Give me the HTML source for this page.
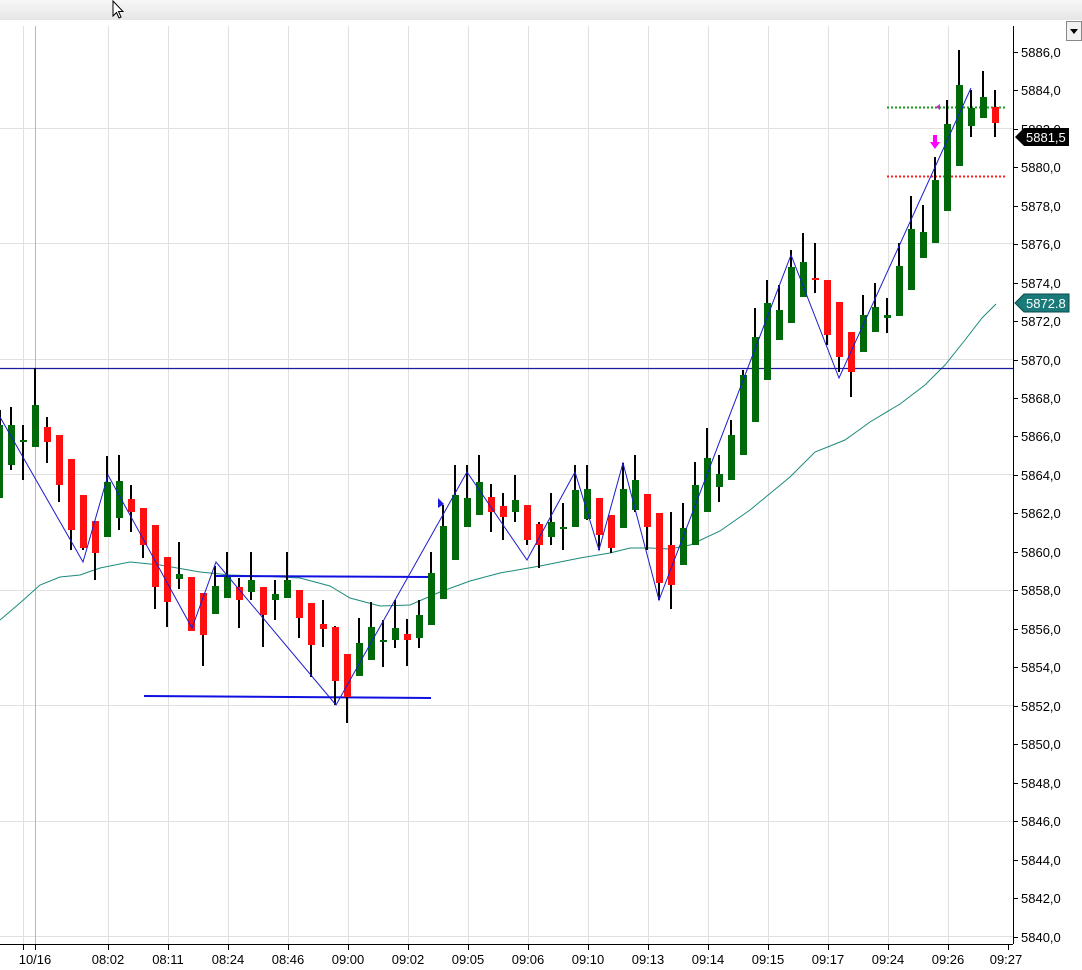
<!DOCTYPE html>
<html><head><meta charset="utf-8"><style>
html,body{margin:0;padding:0;width:1082px;height:970px;overflow:hidden;background:#fff;font-family:"Liberation Sans",sans-serif}
svg{position:absolute;left:0;top:0}
</style></head><body>
<svg width="1082" height="970" viewBox="0 0 1082 970" font-family="Liberation Sans, sans-serif">
<defs><linearGradient id="tb" x1="0" y1="0" x2="0" y2="1"><stop offset="0" stop-color="#f7f7f7"/><stop offset="1" stop-color="#e6e6e6"/></linearGradient></defs>
<rect x="0" y="0" width="1082" height="20" fill="url(#tb)"/>
<g stroke="#e0e0e0" stroke-width="1">
<line x1="23.5" y1="26" x2="23.5" y2="944"/><line x1="108.5" y1="26" x2="108.5" y2="944"/><line x1="168.5" y1="26" x2="168.5" y2="944"/><line x1="228.5" y1="26" x2="228.5" y2="944"/><line x1="288.5" y1="26" x2="288.5" y2="944"/><line x1="348.5" y1="26" x2="348.5" y2="944"/><line x1="408.5" y1="26" x2="408.5" y2="944"/><line x1="468.5" y1="26" x2="468.5" y2="944"/><line x1="528.5" y1="26" x2="528.5" y2="944"/><line x1="588.5" y1="26" x2="588.5" y2="944"/><line x1="648.5" y1="26" x2="648.5" y2="944"/><line x1="708.5" y1="26" x2="708.5" y2="944"/><line x1="768.5" y1="26" x2="768.5" y2="944"/><line x1="828.5" y1="26" x2="828.5" y2="944"/><line x1="888.5" y1="26" x2="888.5" y2="944"/><line x1="948.5" y1="26" x2="948.5" y2="944"/>
<line x1="0" y1="128.5" x2="1013" y2="128.5"/><line x1="0" y1="243.5" x2="1013" y2="243.5"/><line x1="0" y1="359.5" x2="1013" y2="359.5"/><line x1="0" y1="474.5" x2="1013" y2="474.5"/><line x1="0" y1="590.5" x2="1013" y2="590.5"/><line x1="0" y1="705.5" x2="1013" y2="705.5"/><line x1="0" y1="821.5" x2="1013" y2="821.5"/><line x1="0" y1="936.5" x2="1013" y2="936.5"/>
</g>
<line x1="35.5" y1="26" x2="35.5" y2="944" stroke="#b8b8b8"/>
<polyline fill="none" stroke="#1a8a7a" stroke-width="1" points="0,620 20,603 40,585 60,577 80,575 100,568 130,562 160,565 200,572 230,575 260,576 300,578 330,586 350,598 380,606 410,605 440,592 470,581 500,573 540,566 580,558 610,553 630,548 650,548 670,549 690,545 720,531 750,510 790,477 815,452 845,440 870,422 900,404 925,385 945,365 965,340 982,318 996,304"/>
<line x1="0" y1="368.5" x2="1013" y2="368.5" stroke="#1a1aa0" stroke-width="1.2"/>
<line x1="215" y1="576" x2="430" y2="577" stroke="#1010e0" stroke-width="2"/>
<line x1="144" y1="696" x2="431" y2="698" stroke="#1010e0" stroke-width="2"/>
<line x1="887" y1="107.5" x2="1006" y2="107.5" stroke="#1a9a1a" stroke-width="2" stroke-dasharray="2,2"/>
<line x1="887" y1="176.5" x2="1006" y2="176.5" stroke="#ff2020" stroke-width="2" stroke-dasharray="2,2"/>
<g id="c">
<g stroke="#000" stroke-width="2">
<line x1="0" y1="410" x2="0" y2="498"/><line x1="11" y1="407" x2="11" y2="470"/><line x1="23" y1="425" x2="23" y2="480"/><line x1="35" y1="368" x2="35" y2="447"/><line x1="47" y1="417" x2="47" y2="463"/><line x1="59" y1="435" x2="59" y2="502"/><line x1="71" y1="459" x2="71" y2="550"/><line x1="83" y1="495" x2="83" y2="550"/><line x1="95" y1="521" x2="95" y2="580"/><line x1="107" y1="456" x2="107" y2="537"/><line x1="119" y1="455" x2="119" y2="530"/><line x1="131" y1="485" x2="131" y2="532"/><line x1="143" y1="508" x2="143" y2="558"/><line x1="155" y1="525" x2="155" y2="609"/><line x1="167" y1="557" x2="167" y2="627"/><line x1="179" y1="542" x2="179" y2="589"/><line x1="191" y1="577" x2="191" y2="631"/><line x1="203" y1="593" x2="203" y2="666"/><line x1="215" y1="566" x2="215" y2="614"/><line x1="227" y1="552" x2="227" y2="598"/><line x1="239" y1="578" x2="239" y2="628"/><line x1="251" y1="552" x2="251" y2="600"/><line x1="263" y1="587" x2="263" y2="647"/><line x1="275" y1="580" x2="275" y2="620"/><line x1="287" y1="552" x2="287" y2="598"/><line x1="299" y1="590" x2="299" y2="638"/><line x1="311" y1="603" x2="311" y2="677"/><line x1="323" y1="600" x2="323" y2="647"/><line x1="335" y1="626" x2="335" y2="705"/><line x1="347" y1="654" x2="347" y2="723"/><line x1="359" y1="618" x2="359" y2="676"/><line x1="371" y1="602" x2="371" y2="660"/><line x1="383" y1="620" x2="383" y2="667"/><line x1="395" y1="600" x2="395" y2="648"/><line x1="407" y1="619" x2="407" y2="666"/><line x1="419" y1="600" x2="419" y2="648"/><line x1="431" y1="552" x2="431" y2="625"/><line x1="443" y1="505" x2="443" y2="599"/><line x1="455" y1="465" x2="455" y2="560"/><line x1="467" y1="465" x2="467" y2="527"/><line x1="479" y1="455" x2="479" y2="515"/><line x1="491" y1="484" x2="491" y2="532"/><line x1="503" y1="493" x2="503" y2="540"/><line x1="515" y1="475" x2="515" y2="522"/><line x1="527" y1="505" x2="527" y2="545"/><line x1="539" y1="522" x2="539" y2="568"/><line x1="551" y1="493" x2="551" y2="545"/><line x1="563" y1="503" x2="563" y2="550"/><line x1="575" y1="465" x2="575" y2="527"/><line x1="587" y1="465" x2="587" y2="520"/><line x1="599" y1="498" x2="599" y2="550"/><line x1="611" y1="515" x2="611" y2="553"/><line x1="623" y1="463" x2="623" y2="528"/><line x1="635" y1="455" x2="635" y2="512"/><line x1="647" y1="494" x2="647" y2="550"/><line x1="659" y1="515" x2="659" y2="600"/><line x1="671" y1="512" x2="671" y2="609"/><line x1="683" y1="503" x2="683" y2="565"/><line x1="695" y1="462" x2="695" y2="545"/><line x1="707" y1="428" x2="707" y2="512"/><line x1="719" y1="455" x2="719" y2="502"/><line x1="731" y1="420" x2="731" y2="480"/><line x1="743" y1="370" x2="743" y2="455"/><line x1="755" y1="308" x2="755" y2="422"/><line x1="767" y1="280" x2="767" y2="380"/><line x1="779" y1="285" x2="779" y2="340"/><line x1="791" y1="250" x2="791" y2="323"/><line x1="803" y1="233" x2="803" y2="297"/><line x1="815" y1="243" x2="815" y2="293"/><line x1="827" y1="280" x2="827" y2="345"/><line x1="839" y1="305" x2="839" y2="372"/><line x1="851" y1="332" x2="851" y2="397"/><line x1="863" y1="295" x2="863" y2="352"/><line x1="875" y1="283" x2="875" y2="332"/><line x1="887" y1="298" x2="887" y2="333"/><line x1="899" y1="243" x2="899" y2="316"/><line x1="911" y1="196" x2="911" y2="290"/><line x1="923" y1="205" x2="923" y2="258"/><line x1="935" y1="157" x2="935" y2="243"/><line x1="947" y1="100" x2="947" y2="211"/><line x1="959" y1="50" x2="959" y2="166"/><line x1="971" y1="90" x2="971" y2="137"/><line x1="983" y1="71" x2="983" y2="118"/><line x1="995" y1="90" x2="995" y2="137"/>
</g>
<g fill="#006a0a">
<rect x="-4" y="425" width="7" height="73"/><rect x="8" y="425" width="7" height="40"/><rect x="20" y="440" width="7" height="2"/><rect x="32" y="405" width="7" height="42"/><rect x="104" y="482" width="7" height="55"/><rect x="116" y="481" width="7" height="37"/><rect x="176" y="574" width="7" height="5"/><rect x="212" y="586" width="7" height="28"/><rect x="224" y="577" width="7" height="21"/><rect x="248" y="580" width="7" height="12"/><rect x="272" y="594" width="7" height="6"/><rect x="284" y="580" width="7" height="18"/><rect x="356" y="643" width="7" height="33"/><rect x="368" y="627" width="7" height="33"/><rect x="380" y="640" width="7" height="2"/><rect x="392" y="628" width="7" height="12"/><rect x="416" y="615" width="7" height="23"/><rect x="428" y="573" width="7" height="52"/><rect x="440" y="526" width="7" height="73"/><rect x="452" y="495" width="7" height="65"/><rect x="464" y="498" width="7" height="29"/><rect x="476" y="482" width="7" height="33"/><rect x="512" y="500" width="7" height="12"/><rect x="548" y="522" width="7" height="15"/><rect x="560" y="527" width="7" height="2"/><rect x="572" y="490" width="7" height="37"/><rect x="584" y="489" width="7" height="30"/><rect x="620" y="489" width="7" height="39"/><rect x="632" y="480" width="7" height="30"/><rect x="680" y="528" width="7" height="37"/><rect x="692" y="485" width="7" height="60"/><rect x="704" y="458" width="7" height="54"/><rect x="716" y="474" width="7" height="13"/><rect x="728" y="435" width="7" height="45"/><rect x="740" y="375" width="7" height="80"/><rect x="752" y="337" width="7" height="85"/><rect x="764" y="303" width="7" height="77"/><rect x="776" y="310" width="7" height="30"/><rect x="788" y="267" width="7" height="56"/><rect x="800" y="262" width="7" height="35"/><rect x="860" y="315" width="7" height="37"/><rect x="872" y="307" width="7" height="25"/><rect x="884" y="315" width="7" height="3"/><rect x="896" y="266" width="7" height="50"/><rect x="908" y="229" width="7" height="61"/><rect x="920" y="232" width="7" height="26"/><rect x="932" y="180" width="7" height="63"/><rect x="944" y="124" width="7" height="87"/><rect x="956" y="85" width="7" height="81"/><rect x="968" y="108" width="7" height="18"/><rect x="980" y="97" width="7" height="21"/>
</g>
<g fill="#ff1010">
<rect x="44" y="427" width="7" height="15"/><rect x="56" y="435" width="7" height="50"/><rect x="68" y="459" width="7" height="71"/><rect x="80" y="495" width="7" height="53"/><rect x="92" y="521" width="7" height="32"/><rect x="128" y="499" width="7" height="13"/><rect x="140" y="508" width="7" height="37"/><rect x="152" y="525" width="7" height="62"/><rect x="164" y="557" width="7" height="45"/><rect x="188" y="577" width="7" height="54"/><rect x="200" y="593" width="7" height="42"/><rect x="236" y="587" width="7" height="13"/><rect x="260" y="587" width="7" height="28"/><rect x="296" y="590" width="7" height="28"/><rect x="308" y="603" width="7" height="42"/><rect x="320" y="624" width="7" height="5"/><rect x="332" y="627" width="7" height="54"/><rect x="344" y="654" width="7" height="43"/><rect x="404" y="634" width="7" height="6"/><rect x="488" y="497" width="7" height="15"/><rect x="500" y="506" width="7" height="11"/><rect x="524" y="505" width="7" height="35"/><rect x="536" y="524" width="7" height="21"/><rect x="596" y="498" width="7" height="37"/><rect x="608" y="515" width="7" height="33"/><rect x="644" y="494" width="7" height="33"/><rect x="656" y="513" width="7" height="70"/><rect x="668" y="545" width="7" height="40"/><rect x="812" y="278" width="7" height="2"/><rect x="824" y="280" width="7" height="55"/><rect x="836" y="302" width="7" height="55"/><rect x="848" y="332" width="7" height="40"/><rect x="992" y="107" width="7" height="16"/>
</g>
</g>
<polyline fill="none" stroke="#1a1ad0" stroke-width="1" points="0,417 83,562 108,475 192,628 216,562 336,705 467,472 527,560 575,472 599,550 623,463 659,600 791,255 839,378 971,88"/>
<polygon points="438,498 444,504 438,508" fill="#1a1ae0"/>
<polygon points="933,135 937,135 937,142 940,142 935,149 930,142 933,142" fill="#ff00ff"/>
<polygon points="936,107 940,104 940,110" fill="#d020d0"/>
<line x1="1013.5" y1="26" x2="1013.5" y2="944" stroke="#000"/>
<line x1="0" y1="944.5" x2="1013" y2="944.5" stroke="#000"/>
<g font-size="13" fill="#000" stroke="#000">
<g stroke-width="1">
<line x1="1013" y1="52.5" x2="1018" y2="52.5"/><line x1="1013" y1="90.5" x2="1018" y2="90.5"/><line x1="1013" y1="129.5" x2="1018" y2="129.5"/><line x1="1013" y1="167.5" x2="1018" y2="167.5"/><line x1="1013" y1="206.5" x2="1018" y2="206.5"/><line x1="1013" y1="244.5" x2="1018" y2="244.5"/><line x1="1013" y1="283.5" x2="1018" y2="283.5"/><line x1="1013" y1="321.5" x2="1018" y2="321.5"/><line x1="1013" y1="360.5" x2="1018" y2="360.5"/><line x1="1013" y1="398.5" x2="1018" y2="398.5"/><line x1="1013" y1="436.5" x2="1018" y2="436.5"/><line x1="1013" y1="475.5" x2="1018" y2="475.5"/><line x1="1013" y1="513.5" x2="1018" y2="513.5"/><line x1="1013" y1="552.5" x2="1018" y2="552.5"/><line x1="1013" y1="590.5" x2="1018" y2="590.5"/><line x1="1013" y1="629.5" x2="1018" y2="629.5"/><line x1="1013" y1="667.5" x2="1018" y2="667.5"/><line x1="1013" y1="706.5" x2="1018" y2="706.5"/><line x1="1013" y1="744.5" x2="1018" y2="744.5"/><line x1="1013" y1="783.5" x2="1018" y2="783.5"/><line x1="1013" y1="821.5" x2="1018" y2="821.5"/><line x1="1013" y1="860.5" x2="1018" y2="860.5"/><line x1="1013" y1="898.5" x2="1018" y2="898.5"/><line x1="1013" y1="937.5" x2="1018" y2="937.5"/>
<line x1="23.5" y1="944" x2="23.5" y2="950"/><line x1="35.5" y1="944" x2="35.5" y2="950"/><line x1="108.5" y1="944" x2="108.5" y2="950"/><line x1="168.5" y1="944" x2="168.5" y2="950"/><line x1="228.5" y1="944" x2="228.5" y2="950"/><line x1="288.5" y1="944" x2="288.5" y2="950"/><line x1="348.5" y1="944" x2="348.5" y2="950"/><line x1="408.5" y1="944" x2="408.5" y2="950"/><line x1="468.5" y1="944" x2="468.5" y2="950"/><line x1="528.5" y1="944" x2="528.5" y2="950"/><line x1="588.5" y1="944" x2="588.5" y2="950"/><line x1="648.5" y1="944" x2="648.5" y2="950"/><line x1="708.5" y1="944" x2="708.5" y2="950"/><line x1="768.5" y1="944" x2="768.5" y2="950"/><line x1="828.5" y1="944" x2="828.5" y2="950"/><line x1="888.5" y1="944" x2="888.5" y2="950"/><line x1="948.5" y1="944" x2="948.5" y2="950"/><line x1="1008.5" y1="944" x2="1008.5" y2="950"/>
</g>
<g stroke="none">
<text x="1021" y="57">5886,0</text><text x="1021" y="95">5884,0</text><text x="1021" y="134">5882,0</text><text x="1021" y="172">5880,0</text><text x="1021" y="211">5878,0</text><text x="1021" y="249">5876,0</text><text x="1021" y="288">5874,0</text><text x="1021" y="326">5872,0</text><text x="1021" y="365">5870,0</text><text x="1021" y="403">5868,0</text><text x="1021" y="441">5866,0</text><text x="1021" y="480">5864,0</text><text x="1021" y="518">5862,0</text><text x="1021" y="557">5860,0</text><text x="1021" y="595">5858,0</text><text x="1021" y="634">5856,0</text><text x="1021" y="672">5854,0</text><text x="1021" y="711">5852,0</text><text x="1021" y="749">5850,0</text><text x="1021" y="788">5848,0</text><text x="1021" y="826">5846,0</text><text x="1021" y="865">5844,0</text><text x="1021" y="903">5842,0</text><text x="1021" y="942">5840,0</text>
<g text-anchor="middle"><text x="35" y="964">10/16</text><text x="108" y="964">08:02</text><text x="168" y="964">08:11</text><text x="228" y="964">08:24</text><text x="288" y="964">08:46</text><text x="348" y="964">09:00</text><text x="408" y="964">09:02</text><text x="468" y="964">09:05</text><text x="528" y="964">09:06</text><text x="588" y="964">09:10</text><text x="648" y="964">09:13</text><text x="708" y="964">09:14</text><text x="768" y="964">09:15</text><text x="828" y="964">09:17</text><text x="888" y="964">09:24</text><text x="948" y="964">09:26</text><text x="1006" y="964">09:27</text></g>
</g>
</g>
<polygon points="1015,137 1024,128 1069,128 1069,146 1024,146" fill="#000"/>
<text x="1026" y="142" font-size="13" fill="#fff">5881,5</text>
<polygon points="1015,303 1024,294 1069,294 1069,312 1024,312" fill="#1a7a7a" stroke="#0a4a4a"/>
<text x="1026" y="308" font-size="13" fill="#fff">5872.8</text>
<rect x="1066.5" y="21.5" width="15" height="19" fill="#f2f2f2" stroke="#888"/>
<polygon points="1070,29 1078,29 1074,34" fill="#000"/>
<path d="M113,1 L113,16 L116.5,12.5 L119,18 L121,17 L118.5,11.5 L123,11.5 Z" fill="#fff" stroke="#000" stroke-width="1"/>
</svg>
</body></html>
